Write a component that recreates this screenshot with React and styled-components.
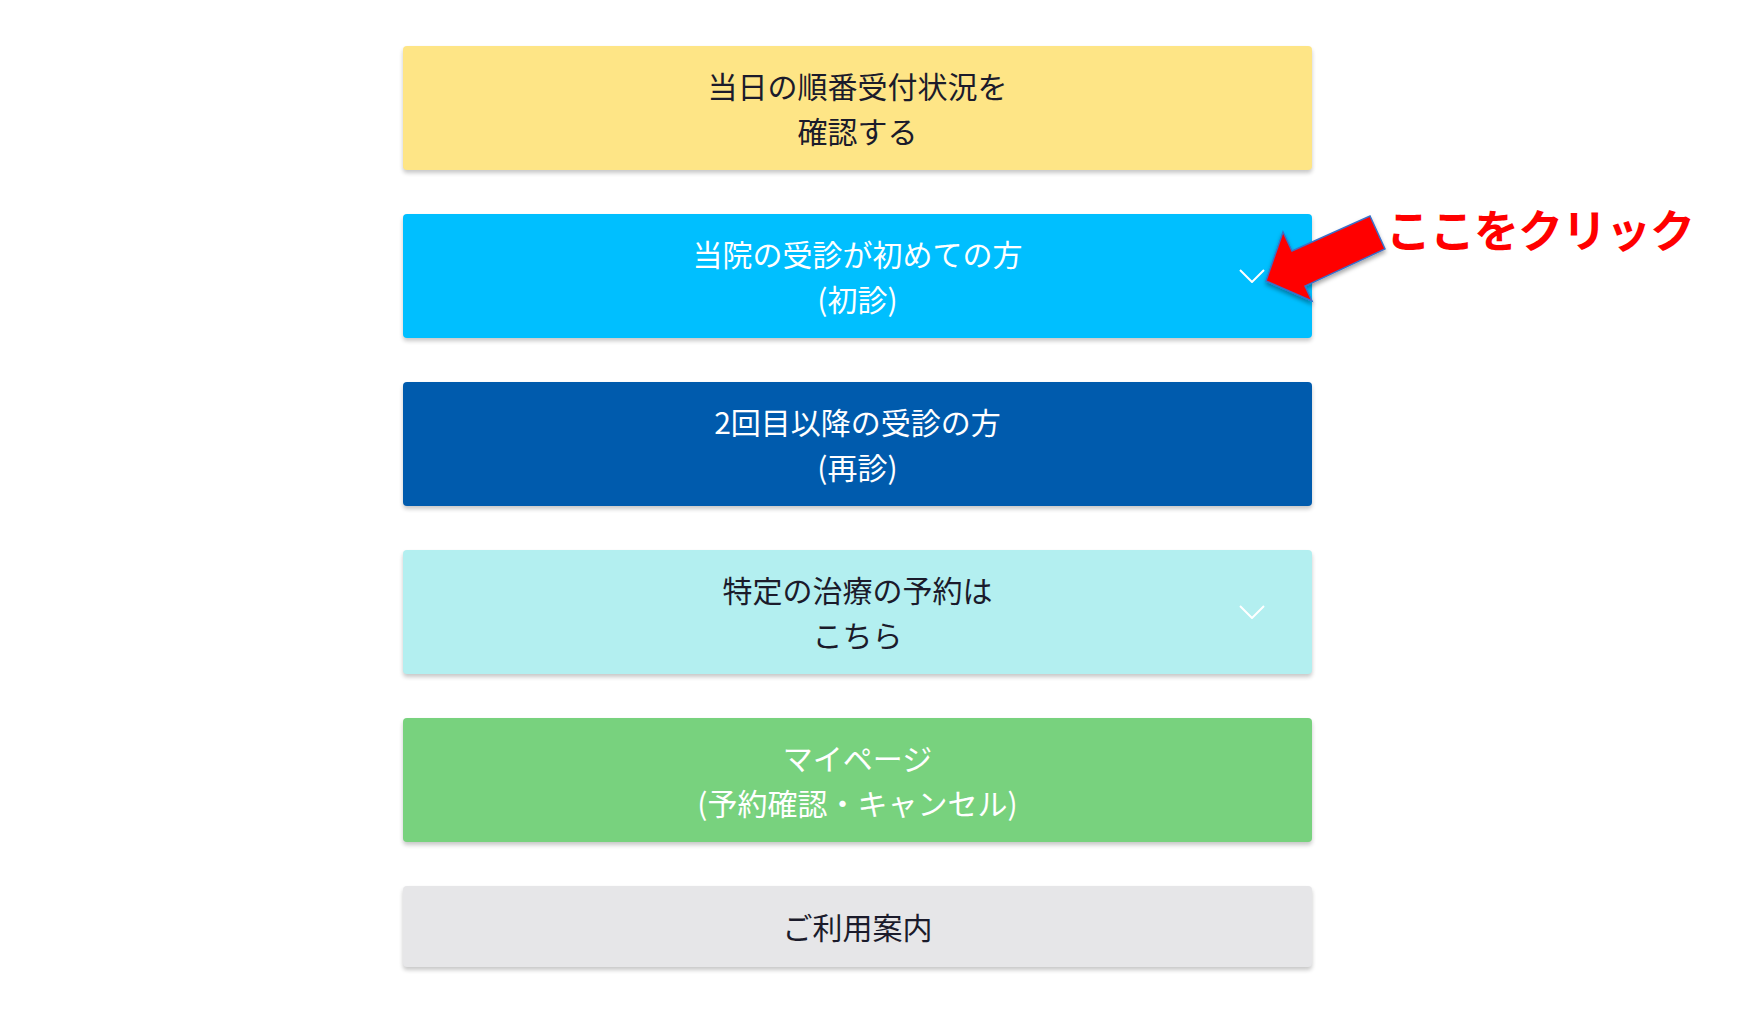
import React from 'react'
import styled, { createGlobalStyle } from 'styled-components'

const GlobalStyle = createGlobalStyle`
  html, body {
    margin: 0;
    background: #ffffff;
  }
  body {
    font-family: 'Noto Sans CJK JP', 'Noto Sans', sans-serif;
  }
`

const Page = styled.div`
  width: 1750px;
  min-height: 1013px;
  padding: 46px 0 0 403px;
  box-sizing: border-box;
`

const Menu = styled.div`
  display: flex;
  flex-direction: column;
  gap: 44px;
  width: 909px;
`

const MenuButton = styled.div`
  position: relative;
  display: flex;
  align-items: center;
  justify-content: center;
  height: ${p => p.$short ? '81px' : '124px'};
  background: ${p => p.$bg};
  color: ${p => p.$fg};
  border-radius: 4px;
  box-shadow: 0 3px 4px rgba(0, 0, 0, 0.22);
  font-size: 30px;
  line-height: 45px;
  text-align: center;
  cursor: pointer;
`

const Label = styled.span`
  display: block;
  white-space: pre-line;
`

const Chevron = styled.svg`
  position: absolute;
  right: 47px;
  top: 50%;
  margin-top: -7px;
`

// annotation drawn over the first-visit button
const ArrowMark = styled.svg`
  position: absolute;
  left: 847px;
  top: -5px;
  overflow: visible;
`

const ClickNote = styled.div`
  position: absolute;
  left: 983px;
  top: -8px;
  font-size: 45px;
  line-height: 1;
  font-weight: 700;
  color: #ff0000;
  letter-spacing: -1px;
  white-space: nowrap;
`

const buttons = [
  { text: '当日の順番受付状況を\n確認する', bg: '#fee586', fg: '#1b1b2b' },
  { text: '当院の受診が初めての方\n(初診)', bg: '#00bfff', fg: '#ffffff', chevron: true, note: true },
  { text: '2回目以降の受診の方\n(再診)', bg: '#005bad', fg: '#ffffff' },
  { text: '特定の治療の予約は\nこちら', bg: '#b3eff0', fg: '#1b1b2b', chevron: true },
  { text: 'マイページ\n(予約確認・キャンセル)', bg: '#78d27e', fg: '#ffffff' },
  { text: 'ご利用案内', bg: '#e6e6e8', fg: '#1b1b2b', short: true },
]

function ChevronDown() {
  return (
    <Chevron width="26" height="14" viewBox="0 0 26 14">
      <polyline points="1,1 13,13 25,1" fill="none" stroke="#ffffff" strokeWidth="2" />
    </Chevron>
  )
}

function ClickHere() {
  return (
    <>
      <ArrowMark width="140" height="100" viewBox="0 0 140 100">
        <defs>
          <filter id="arrowShadow" x="-20%" y="-20%" width="140%" height="150%">
            <feDropShadow dx="0" dy="3" stdDeviation="2" floodColor="#000" floodOpacity="0.35" />
          </filter>
        </defs>
        <polygon
          points="16,72 33,23 42,42 120,7 135,40 55,77 62,92"
          fill="#ff0000"
          stroke="#3a6fc8"
          strokeWidth="1.5"
          filter="url(#arrowShadow)"
        />
      </ArrowMark>
      <ClickNote>ここをクリック</ClickNote>
    </>
  )
}

export default function App() {
  return (
    <>
      <GlobalStyle />
      <Page>
        <Menu>
          {buttons.map(b => (
            <MenuButton key={b.text} $bg={b.bg} $fg={b.fg} $short={b.short}>
              <Label>{b.text}</Label>
              {b.chevron && <ChevronDown />}
              {b.note && <ClickHere />}
            </MenuButton>
          ))}
        </Menu>
      </Page>
    </>
  )
}
